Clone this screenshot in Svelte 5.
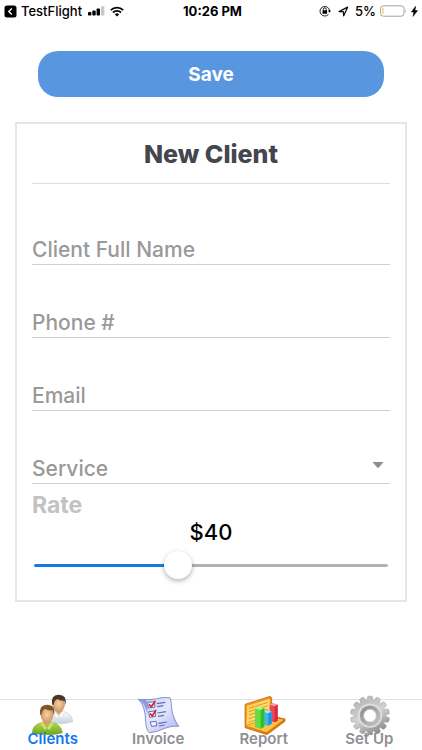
<script>
  let name = $state('');
  let phone = $state('');
  let email = $state('');
  let service = $state('');
  let rate = $state(40);
  let active = $state('Clients');

  const tabs = ['Clients', 'Invoice', 'Report', 'Set Up'];
  const teeth = Array.from({ length: 14 }, (_, i) => (i * 360) / 14);
</script>

<div class="app">
  <header class="status">
    <div class="side">
      <svg width="13" height="13" viewBox="0 0 13 13" aria-hidden="true">
        <rect x="0.5" y="0.5" width="12" height="12" rx="2.5" fill="#000" />
        <path d="M7.8 3.4 4.8 6.5l3 3.1" fill="none" stroke="#fff" stroke-width="1.4" />
      </svg>
      <span class="carrier">TestFlight</span>
      <svg class="signal" width="17" height="10" viewBox="0 0 17 10" aria-hidden="true">
        <rect x="0" y="6" width="3.4" height="3.5" rx="0.8" />
        <rect x="4.3" y="4.6" width="3.4" height="4.9" rx="0.8" />
        <rect x="8.6" y="2.4" width="3.4" height="7.1" rx="0.8" />
        <rect x="13" y="0.2" width="3.4" height="9.3" rx="0.8" fill="#c8c8c8" />
      </svg>
      <svg width="14" height="11" viewBox="0 0 14 11" aria-hidden="true">
        <path d="M0.8 4.1a9 9 0 0 1 12.4 0M3 6.5a5.8 5.8 0 0 1 8 0" fill="none" stroke="#000" stroke-width="1.8" />
        <path d="M7 10.6 4.9 8.4a3 3 0 0 1 4.2 0z" />
      </svg>
    </div>
    <span class="time">10:26 PM</span>
    <div class="side end">
      <svg width="12" height="12" viewBox="0 0 12 12" aria-hidden="true">
        <path d="M9.5 9.3A4.8 4.8 0 1 1 10.6 6" fill="none" stroke="#222" stroke-width="1" />
        <path d="M8.9 5.6h3.1l-1.5 2.1z" />
        <rect x="3.5" y="5.3" width="4.6" height="3.4" rx="0.5" />
        <path d="M4.4 5.4V4.2a1.4 1.4 0 0 1 2.8 0v1.2" fill="none" stroke="#000" stroke-width="0.9" />
      </svg>
      <svg class="arrow" width="11" height="11" viewBox="0 0 11 11" aria-hidden="true">
        <path d="M1 5.6 9.6 1.2 5.7 9.8 5.3 5.7z" fill="none" stroke="#111" stroke-width="1.3" stroke-linejoin="round" />
      </svg>
      <span class="percent">5%</span>
      <svg width="27" height="12" viewBox="0 0 27 12" aria-hidden="true">
        <rect x="0.5" y="0.8" width="23.5" height="10.4" rx="2.8" fill="#fff" stroke="#a3a3a3" />
        <path d="M2.2 2.7h1.4v6.6H2.2z" fill="#f5cf62" />
        <path d="M25.2 4.2q1.5 1.8 0 3.6z" fill="#a3a3a3" />
      </svg>
      <svg width="7" height="11" viewBox="0 0 7 11" aria-hidden="true">
        <path d="M4.6 0.3 0.4 6h2.4l-0.8 4.4L6.6 4.6H4z" stroke="#000" stroke-width="0.5" />
      </svg>
    </div>
  </header>

  <main>
    <button class="save" type="submit" form="client">Save</button>

    <form id="client" class="card" onsubmit={(e) => e.preventDefault()}>
      <h1>New Client</h1>
      <input class="field first" type="text" placeholder="Client Full Name" aria-label="Client Full Name" bind:value={name} />
      <input class="field" type="tel" placeholder="Phone #" aria-label="Phone #" bind:value={phone} />
      <input class="field" type="email" placeholder="Email" aria-label="Email" bind:value={email} />
      <div class="select">
        <select class="field" aria-label="Service" bind:value={service}>
          <option value="">Service</option>
          <option value="hourly">Hourly</option>
        </select>
        <svg class="caret" width="12" height="6" viewBox="0 0 12 6" aria-hidden="true">
          <path d="M0.5 0h11L6.8 5.4q-.8.7-1.6 0z" fill="#8e8e8e" />
        </svg>
      </div>
      <label class="rate" for="rate">Rate</label>
      <output for="rate">${rate}</output>
      <input id="rate" class="slider" type="range" min="0" max="100" bind:value={rate} style="--fill: {rate}%" />
    </form>
  </main>

  <nav>
    {#each tabs as tab}
      <button class="tab" class:active={active === tab} onclick={() => (active = tab)}>
        <svg class="icon" width="44" height="42" viewBox="33 3 132 126" aria-hidden="true">
          {#if tab === 'Clients'}
            <defs>
              <linearGradient id="white-shirt" x1="0" y1="0" x2="0" y2="1"><stop offset="0" stop-color="#fbfdfd" /><stop offset="1" stop-color="#c5d2dc" /></linearGradient>
              <linearGradient id="green-shirt" x1="0" y1="0" x2="0" y2="1"><stop offset="0" stop-color="#b4d84c" /><stop offset="1" stop-color="#6fa51d" /></linearGradient>
              <radialGradient id="skin"><stop offset="0" stop-color="#f6d2a5" /><stop offset="1" stop-color="#cf9966" /></radialGradient>
            </defs>
            <path d="M76 88q2-22 26-29l28-1q26 6 28 31-18 6-42 6-25 0-40-7z" fill="url(#white-shirt)" stroke="#b5c2cb" stroke-width="1.5" />
            <path d="m104 55 12 15 13-15-4-9h-18z" fill="#d9a56f" />
            <path d="m103 56 13 17-7 6-10-21zM130 56l-14 17 8 6 10-21z" fill="#fff" stroke="#c3ccd3" />
            <ellipse cx="116" cy="36" rx="19" ry="23" fill="url(#skin)" />
            <path d="M96 37Q92 9 115 8q27-1 22 30l-4-12q-13 1-21-5-10 5-11 18z" fill="#4b3827" />
            <path d="M37 122q0-22 25-30l32-1q30 6 33 31-17 6-45 6-30 0-45-6z" fill="url(#green-shirt)" stroke="#729f2c" stroke-width="1.5" />
            <path d="m67 88 14 17 13-17-4-9H70z" fill="#d6a16a" />
            <path d="m65 89 16 19-7 6-14-22zM95 89l-14 19 8 6 12-22z" fill="#c8e36e" />
            <ellipse cx="81" cy="68" rx="19" ry="24" fill="url(#skin)" />
            <path d="M61 69Q55 39 81 38q27 0 21 32l-5-15q-14 1-22-5-9 5-11 20z" fill="#815524" />
          {:else if tab === 'Invoice'}
            <defs>
              <linearGradient id="paper" x1="0" y1="0" x2="1" y2="1"><stop offset="0" stop-color="#c6ccf8" /><stop offset="0.5" stop-color="#e3e8ff" /><stop offset="1" stop-color="#a9b3f0" /></linearGradient>
            </defs>
            <path d="M40 22q26 3 51-1 24-7 43-4 5 3 5 22 1 34 22 64-19-3-42 6-24 12-46 13-9-6-11-33-1-49-22-67z" fill="url(#paper)" stroke="#5661a8" stroke-width="2" />
            <path d="M40 22q13 2 24 1 5 20 3 44-5-32-27-45z" fill="#8d98e2" />
            <path d="M68 31l20-2 2 16-20 3zM71 59l19-2 2 16-18 3zM75 90l18-2 3 13-16 2z" fill="#f4f6ff" stroke="#4d579c" stroke-width="2.5" />
            <path d="m95 35 26-4M97 44l18-3M97 63l26-4M99 73l18-3M100 94l26-4M102 102l17-3" stroke="#626dac" stroke-width="3.5" />
            <path d="m72 37 7 7 12-17M75 65l7 7 11-18" fill="none" stroke="#dc1e2d" stroke-width="5" />
          {:else if tab === 'Report'}
            <defs>
              <linearGradient id="folder" x1="0" y1="0" x2="1" y2="1"><stop offset="0" stop-color="#f3a01c" /><stop offset="1" stop-color="#dc6909" /></linearGradient>
              <linearGradient id="sheet" x1="0" y1="0" x2="1" y2="1"><stop offset="0" stop-color="#ffc63d" /><stop offset="1" stop-color="#fff2a0" /></linearGradient>
            </defs>
            <path d="m42 37 75-24 5 4v54l40 10v7l-54 40-66-21z" fill="url(#folder)" stroke="#c45c07" stroke-width="2" />
            <path d="m48 41 68-21v56L46 98z" fill="url(#sheet)" />
            <path d="m54 49 57-18M54 59l57-18M54 69l57-18M53 80l57-18M52 91l42-13" stroke="#e39a20" stroke-width="3" />
            <path d="m46 101 72-25 39 7-50 38z" fill="#fbc544" />
            <path d="m116 39 9-5 15 4v48l-9 5-15-4z" fill="#f04458" /><path d="m116 39 9-5 15 4-9 5z" fill="#ff9aa2" /><path d="M131 43l9-5v48l-9 5z" fill="#d52c45" />
            <path d="m97 60 10-5 15 4v36l-10 6-15-4z" fill="#41b5ef" /><path d="m97 60 10-5 15 4-10 5z" fill="#a5e4ff" /><path d="M112 64l10-5v36l-10 6z" fill="#1e93d6" />
            <path d="m72 50 11-6 17 4v56l-11 6-17-5z" fill="#63dc45" /><path d="m72 50 11-6 17 4-11 6z" fill="#b6f29c" /><path d="M89 54l11-6v56l-11 6z" fill="#34bd2a" />
          {:else}
            <defs>
              <linearGradient id="metal" gradientUnits="userSpaceOnUse" x1="70" y1="15" x2="130" y2="127"><stop offset="0" stop-color="#b4b4b4" /><stop offset="0.5" stop-color="#d2d2d2" /><stop offset="1" stop-color="#858585" /></linearGradient>
              <linearGradient id="ring" x1="0" y1="0" x2="1" y2="1"><stop offset="0" stop-color="#868686" /><stop offset="1" stop-color="#c9c9c9" /></linearGradient>
            </defs>
            <path d={teeth.map((a) => {
              const at = (r, d) => {
                const t = ((a + d) * Math.PI) / 180;
                return `${102 + r * Math.sin(t)} ${71 - r * Math.cos(t)}`;
              };
              return `L${at(47, -11)}L${at(58, -7)}Q${at(61, 0)} ${at(58, 7)}L${at(47, 11)}`;
            }).join('').replace('L', 'M') + 'z'} fill="url(#metal)" stroke="#a2a2a2" stroke-width="1.5" stroke-linejoin="round" />
            <circle cx="102" cy="71" r="34" fill="none" stroke="#dedede" stroke-width="5" />
            <circle cx="102" cy="71" r="30" fill="url(#ring)" />
            <circle cx="102" cy="71" r="19" fill="#fff" stroke="#c4c4c4" stroke-width="2" />
          {/if}
        </svg>
        <span>{tab}</span>
      </button>
    {/each}
  </nav>
</div>

<style>
  :global(body) {
    background: #fff;
  }
  .app {
    box-sizing: border-box;
    min-height: 100vh;
    display: flex;
    flex-direction: column;
    font-family: Inter, 'Liberation Sans', sans-serif;
    color: #000;
  }
  .status {
    display: grid;
    grid-template-columns: 1fr auto 1fr;
    align-items: center;
    height: 22px;
    padding: 0 4px;
    font-size: 13px;
    font-weight: 500;
  }
  .side {
    display: flex;
    align-items: center;
    gap: 4px;
  }
  .end {
    justify-content: flex-end;
  }
  .signal {
    margin: 0 1px 0 2px;
  }
  .arrow {
    margin: 0 2px 0 3px;
  }
  .time {
    padding-left: 3px;
    font-weight: 700;
  }
  main {
    flex: 1;
    padding: 29px 15px 24px;
  }
  button,
  input,
  select {
    font-family: inherit;
  }
  .save {
    display: block;
    width: calc(100% - 46px);
    height: 46px;
    margin: 0 23px 25px;
    border: 0;
    border-radius: 20px;
    background: #5897e0;
    color: #fff;
    font-size: 19px;
    font-weight: 700;
  }
  .card {
    display: flex;
    flex-direction: column;
    padding: 0 15px 21px;
    border: 2px solid #e6e6ea;
  }
  h1 {
    margin: 0;
    height: 59px;
    border-bottom: 1px solid #dedede;
    line-height: 60px;
    font-size: 25px;
    font-weight: 800;
    text-align: center;
    color: #43464d;
  }
  .field {
    box-sizing: border-box;
    width: 100%;
    height: 32px;
    margin: 41px 0 0;
    padding: 2px 0 0;
    border: 0;
    border-bottom: 1px solid #cfcfcf;
    border-radius: 0;
    outline: 0;
    background: none;
    font-size: 21px;
    font-weight: 500;
    color: #999;
  }
  .first {
    margin-top: 49px;
  }
  .field::placeholder {
    color: #999;
    opacity: 1;
  }
  .select {
    position: relative;
  }
  select {
    appearance: none;
  }
  .caret {
    position: absolute;
    right: 6px;
    bottom: 16px;
    pointer-events: none;
  }
  .rate {
    margin-top: 7px;
    line-height: 28px;
    font-size: 23px;
    font-weight: 700;
    color: #c2c2c2;
  }
  output {
    line-height: 26px;
    font-size: 22px;
    font-weight: 500;
    text-align: center;
  }
  .slider {
    appearance: none;
    height: 28px;
    margin: 6px 2px 0;
    background: none;
  }
  .slider::-webkit-slider-runnable-track {
    height: 3px;
    border-radius: 2px;
    background: linear-gradient(to right, #1a77e6 var(--fill), #b2b2b2 var(--fill));
  }
  .slider::-webkit-slider-thumb {
    appearance: none;
    width: 28px;
    height: 28px;
    margin-top: -13px;
    border-radius: 50%;
    background: #fff;
    box-shadow: 0 2px 5px rgba(0, 0, 0, 0.3);
  }
  nav {
    display: grid;
    grid-template-columns: repeat(4, 1fr);
    height: 50px;
    border-top: 1px solid #e2e2e2;
  }
  .tab {
    display: flex;
    flex-direction: column;
    align-items: center;
    padding: 0;
    border: 0;
    background: none;
    font-size: 15px;
    font-weight: 600;
    line-height: 20px;
    color: #8e8e93;
  }
  .active {
    color: #1278f0;
  }
  .icon {
    flex: none;
    margin: -7px 0 -6px;
  }
  .tab span {
    position: relative;
  }
</style>
